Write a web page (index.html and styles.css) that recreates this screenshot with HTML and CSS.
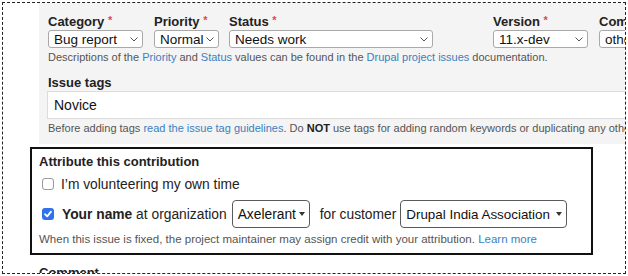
FILE: index.html
```html
<!DOCTYPE html>
<html lang="en">
<head>
    <meta charset="UTF-8">
    <title>Issue metadata</title>
    <link rel="stylesheet" href="styles.css">
</head>
<body>
    <div class="frame">
        <div class="panel">
            <div class="field-row">
                <div class="field">
                    <label>Category <span class="req">*</span></label>
                    <div class="select w-category">Bug report
                        <svg class="chev" viewBox="0 0 8 5"><polyline points="0.5,0.5 4,4 7.5,0.5"/></svg>
                    </div>
                </div>
                <div class="field">
                    <label>Priority <span class="req">*</span></label>
                    <div class="select w-priority">Normal
                        <svg class="chev" viewBox="0 0 8 5"><polyline points="0.5,0.5 4,4 7.5,0.5"/></svg>
                    </div>
                </div>
                <div class="field">
                    <label>Status <span class="req">*</span></label>
                    <div class="select w-status">Needs work
                        <svg class="chev" viewBox="0 0 8 5"><polyline points="0.5,0.5 4,4 7.5,0.5"/></svg>
                    </div>
                </div>
                <div class="field">
                    <label>Version <span class="req">*</span></label>
                    <div class="select w-version">11.x-dev
                        <svg class="chev" viewBox="0 0 8 5"><polyline points="0.5,0.5 4,4 7.5,0.5"/></svg>
                    </div>
                </div>
                <div class="field">
                    <label>Component <span class="req">*</span></label>
                    <div class="select w-component">other
                        <svg class="chev" viewBox="0 0 8 5"><polyline points="0.5,0.5 4,4 7.5,0.5"/></svg>
                    </div>
                </div>
            </div>
            <p class="help">Descriptions of the <a href="#">Priority</a> and <a href="#">Status</a> values can be found in the <a href="#">Drupal project issues</a> documentation.</p>

            <div class="tags">
                <label>Issue tags</label>
                <div class="text-input">Novice</div>
                <p class="help">Before adding tags <a href="#">read the issue tag guidelines</a>. Do <strong>NOT</strong> use tags for adding random keywords or duplicating any other fields.</p>
            </div>
        </div>

        <div class="attribution">
            <div class="attr-title">Attribute this contribution</div>
            <div class="attr-row">
                <span class="checkbox"></span>
                <span>I’m volunteering my own time</span>
            </div>
            <div class="attr-row">
                <span class="checkbox checked">
                    <svg viewBox="0 0 12 12"><polyline points="3,6.2 5.2,8.4 9,3.6"/></svg>
                </span>
                <span><strong>Your name</strong> at organization</span>
                <span class="dropdown org">Axelerant <span class="caret"></span></span>
                <span class="for">for customer</span>
                <span class="dropdown customer">Drupal India Association <span class="caret"></span></span>
            </div>
            <p class="help">When this issue is fixed, the project maintainer may assign credit with your attribution. <a href="#">Learn more</a></p>
        </div>

        <div class="comment-label">Comment</div>
    </div>
</body>
</html>
```

FILE: styles.css
```css
/* Reset */
* {
    margin: 0;
    padding: 0;
    box-sizing: border-box;
}

body {
    font-family: 'Liberation Sans', Arial, sans-serif;
    color: #222;
    background: white;
}

a {
    color: #3a7fc1;
    text-decoration: none;
}

.frame {
    margin: 2px 0 0 2px;
    width: 624px;
    height: 272px;
    border: 1px dashed #222;
    overflow: hidden;
}

/* Grey metadata panel */
.panel {
    margin-left: 36px;
    width: 640px;
    background: #f4f4f4;
    padding: 9px 0 9px 9px;
    white-space: nowrap;
}

.field-row {
    display: grid;
    grid-template-columns: 106px 75px 264px 106px 120px;
}

label,
.attr-title,
.comment-label {
    display: block;
    font-size: 13px;
    font-weight: bold;
    line-height: 16px;
    color: #222;
}

.req {
    color: #e2474b;
    font-size: 11px;
    vertical-align: 2px;
}

.select {
    display: flex;
    align-items: center;
    justify-content: space-between;
    height: 18px;
    padding: 0 4px 0 5px;
    background: white;
    border: 1px solid #a9a9a9;
    border-radius: 3px;
    font-size: 13.5px;
    color: #111;
}

.chev {
    width: 8px;
    height: 5px;
    fill: none;
    stroke: #555;
    stroke-width: 1;
}

.w-category { width: 95px; }
.w-priority { width: 65px; }
.w-status { width: 204px; }
.w-version { width: 95px; }
.w-component { width: 100px; }

.help {
    margin-top: 2px;
    font-size: 11px;
    line-height: 14px;
    color: #555;
}

.help strong {
    color: #222;
}

.tags {
    margin-top: 11px;
}

.text-input {
    margin-left: -1px;
    height: 28px;
    padding: 0 6px;
    background: white;
    border: 1px solid #ddd;
    font-size: 14px;
    line-height: 26px;
    color: #111;
}

/* Contribution attribution box */
.attribution {
    margin: 3px 0 0 27px;
    width: 563px;
    border: 2px solid #111;
    padding: 5px 0 7px 7px;
}

.attr-row {
    display: flex;
    align-items: center;
    height: 20px;
    margin-top: 4px;
    padding-left: 3px;
    font-size: 13.8px;
    color: #222;
    white-space: nowrap;
}

.attr-row + .attr-row {
    height: 28px;
    margin-top: 6px;
}

.checkbox {
    width: 12px;
    height: 12px;
    margin-right: 7px;
    border: 1px solid #9a9a9a;
    border-radius: 3px;
    background: white;
    flex-shrink: 0;
}

.checkbox.checked {
    margin-right: 8px;
    border: none;
    background: #2f72ec;
}

.checkbox svg {
    display: block;
    width: 12px;
    height: 12px;
    fill: none;
    stroke: white;
    stroke-width: 1.8;
    stroke-linecap: round;
    stroke-linejoin: round;
}

.dropdown {
    display: inline-flex;
    align-items: center;
    height: 28px;
    padding: 0 4px 0 5px;
    border: 1.5px solid #5a5a5a;
    border-radius: 4px;
    background: white;
    color: #111;
}

.org {
    margin-left: 5px;
    width: 78px;
}

.customer {
    margin-left: 4px;
    width: 167px;
    font-size: 13.4px;
}

.caret {
    margin-left: auto;
    width: 0;
    height: 0;
    border-left: 3.5px solid transparent;
    border-right: 3.5px solid transparent;
    border-top: 4px solid #333;
}

.for {
    margin-left: 10px;
}

.attribution .help {
    margin-top: 4px;
    font-size: 11.5px;
}

.comment-label {
    margin: 10px 0 0 36px;
}
```
